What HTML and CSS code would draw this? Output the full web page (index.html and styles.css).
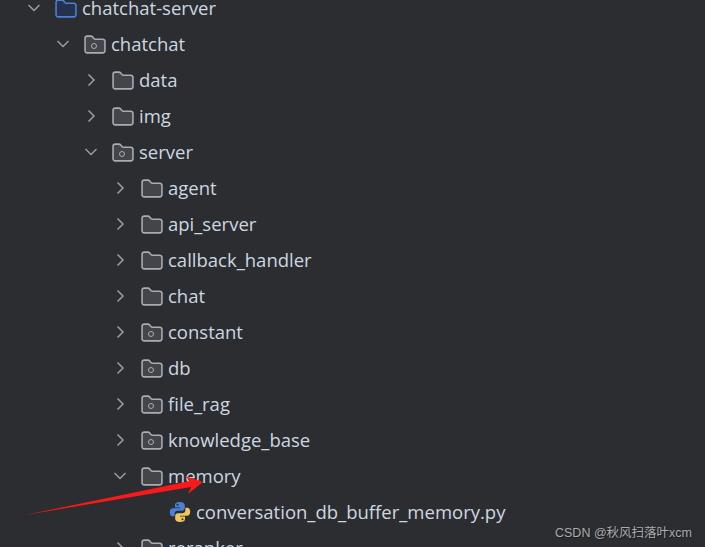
FILE: index.html
```html
<!DOCTYPE html>
<html lang="zh-CN">
<head>
  <meta charset="UTF-8" />
  <title>chatchat-server</title>
  <link rel="stylesheet" href="styles.css">
</head>
<body>

  <svg class="defs" width="0" height="0">
    <symbol id="folder" viewBox="0 0 21 18">
      <path d="M1 3.2C1 1.9 1.9 1 3.2 1H6.6C7.3 1 7.9 1.3 8.3 1.8L9.6 3.4C9.9 3.8 10.4 4 10.9 4H17.8C19.1 4 20 4.9 20 6.2V14.8C20 16.1 19.1 17 17.8 17H3.2C1.9 17 1 16.1 1 14.8Z" />
    </symbol>
    <symbol id="chev-open" viewBox="0 0 14 14">
      <path d="M1.5 4L7 9.5L12.5 4" />
    </symbol>
    <symbol id="chev-closed" viewBox="0 0 14 14">
      <path d="M4.5 1.5L10 7L4.5 12.5" />
    </symbol>
  </svg>

  <div class="arbol">
    <div class="fila nivel-0">
      <svg class="chev"><use href="#chev-open" /></svg>
      <svg class="pasta azul"><use href="#folder" /></svg>
      <span class="nome">chatchat-server</span>
    </div>
    <div class="fila nivel-1">
      <svg class="chev"><use href="#chev-open" /></svg>
      <span class="pasta-pkg"><svg class="pasta"><use href="#folder" /></svg><i class="anel"></i></span>
      <span class="nome">chatchat</span>
    </div>
    <div class="fila nivel-2">
      <svg class="chev"><use href="#chev-closed" /></svg>
      <svg class="pasta"><use href="#folder" /></svg>
      <span class="nome">data</span>
    </div>
    <div class="fila nivel-2">
      <svg class="chev"><use href="#chev-closed" /></svg>
      <svg class="pasta"><use href="#folder" /></svg>
      <span class="nome">img</span>
    </div>
    <div class="fila nivel-2">
      <svg class="chev"><use href="#chev-open" /></svg>
      <span class="pasta-pkg"><svg class="pasta"><use href="#folder" /></svg><i class="anel"></i></span>
      <span class="nome">server</span>
    </div>
    <div class="fila nivel-3">
      <svg class="chev"><use href="#chev-closed" /></svg>
      <svg class="pasta"><use href="#folder" /></svg>
      <span class="nome">agent</span>
    </div>
    <div class="fila nivel-3">
      <svg class="chev"><use href="#chev-closed" /></svg>
      <svg class="pasta"><use href="#folder" /></svg>
      <span class="nome">api_server</span>
    </div>
    <div class="fila nivel-3">
      <svg class="chev"><use href="#chev-closed" /></svg>
      <svg class="pasta"><use href="#folder" /></svg>
      <span class="nome">callback_handler</span>
    </div>
    <div class="fila nivel-3">
      <svg class="chev"><use href="#chev-closed" /></svg>
      <svg class="pasta"><use href="#folder" /></svg>
      <span class="nome">chat</span>
    </div>
    <div class="fila nivel-3">
      <svg class="chev"><use href="#chev-closed" /></svg>
      <span class="pasta-pkg"><svg class="pasta"><use href="#folder" /></svg><i class="anel"></i></span>
      <span class="nome">constant</span>
    </div>
    <div class="fila nivel-3">
      <svg class="chev"><use href="#chev-closed" /></svg>
      <span class="pasta-pkg"><svg class="pasta"><use href="#folder" /></svg><i class="anel"></i></span>
      <span class="nome">db</span>
    </div>
    <div class="fila nivel-3">
      <svg class="chev"><use href="#chev-closed" /></svg>
      <span class="pasta-pkg"><svg class="pasta"><use href="#folder" /></svg><i class="anel"></i></span>
      <span class="nome">file_rag</span>
    </div>
    <div class="fila nivel-3">
      <svg class="chev"><use href="#chev-closed" /></svg>
      <span class="pasta-pkg"><svg class="pasta"><use href="#folder" /></svg><i class="anel"></i></span>
      <span class="nome">knowledge_base</span>
    </div>
    <div class="fila nivel-3">
      <svg class="chev"><use href="#chev-open" /></svg>
      <svg class="pasta"><use href="#folder" /></svg>
      <span class="nome">memory</span>
    </div>
    <div class="fila nivel-4">
      <svg class="py" viewBox="0 0 22 22">
        <path class="py-azul" d="M10.8 1C6.5 1 6 2.8 6 4.2V6.5H11V7.3H3.8C2 7.3 .8 8.8 .8 11.2C.8 13.6 2 15.2 3.8 15.2H5.6V12.7C5.6 11 7 9.7 8.7 9.7H13.2C14.6 9.7 15.8 8.5 15.8 7.1V4.2C15.8 2.5 14.3 1 10.8 1Z" />
        <path class="py-amarelo" d="M11.2 21C15.5 21 16 19.2 16 17.8V15.5H11V14.7H18.2C20 14.7 21.2 13.2 21.2 10.8C21.2 8.4 20 6.8 18.2 6.8H16.4V9.3C16.4 11 15 12.3 13.3 12.3H8.8C7.4 12.3 6.2 13.5 6.2 14.9V17.8C6.2 19.5 7.7 21 11.2 21Z" />
        <circle class="py-olho" cx="8.5" cy="3.8" r="1" />
        <circle class="py-olho" cx="13.5" cy="18.2" r="1" />
      </svg>
      <span class="nome">conversation_db_buffer_memory.py</span>
    </div>
    <div class="fila nivel-3">
      <svg class="chev"><use href="#chev-closed" /></svg>
      <svg class="pasta"><use href="#folder" /></svg>
      <span class="nome">reranker</span>
    </div>
  </div>

  <svg class="seta" viewBox="0 0 705 547">
    <path d="M25 515L190 481L185 476L203 482L188 494L191 487Z" />
  </svg>

  <div class="marca">CSDN @秋风扫落叶xcm</div>

</body>
</html>
```

FILE: styles.css
```css
html, body {
  height: 100%;
}

body {
  margin: 0;
  background-color: #2b2d30;
  overflow: hidden;
  position: relative;
  font-family: "Open Sans", "Noto Sans", sans-serif;
}

.defs {
  display: block;
  height: 0;
}

.arbol {
  margin-top: -10px;
  display: flex;
  flex-direction: column;
}

.fila {
  height: 36px;
  flex: none;
  display: flex;
  align-items: center;
  font-size: 18.5px;
  color: #cdd7e2;
  white-space: nowrap;
}

.nome {
  margin-bottom: 2px;
}

.nivel-0 { padding-left: 27px; }
.nivel-1 { padding-left: 56px; }
.nivel-2 { padding-left: 84px; }
.nivel-3 { padding-left: 113px; }
.nivel-4 { padding-left: 169px; }

.chev {
  width: 14px;
  height: 14px;
  flex: none;
  margin-right: 14px;
  fill: none;
  stroke: #9a9da3;
  stroke-width: 1.5;
}

.pasta {
  width: 22px;
  height: 19px;
  flex: none;
  display: block;
  fill: #43454a;
  stroke: #a9acb1;
  stroke-width: 1.5;
}

.pasta.azul {
  fill: #25324d;
  stroke: #4c7fd6;
}

.fila > .pasta,
.pasta-pkg {
  margin-right: 5px;
}

.pasta-pkg {
  position: relative;
  flex: none;
}

.anel {
  position: absolute;
  left: 7px;
  top: 8px;
  width: 4px;
  height: 4px;
  border: 1.5px solid #a9acb1;
  border-radius: 50%;
}

.py {
  width: 22px;
  height: 22px;
  flex: none;
  margin-right: 5px;
}

.py-azul { fill: #4a80d8; }
.py-amarelo { fill: #f2c55c; }
.py-olho { fill: #2b2d30; }

.seta {
  position: absolute;
  left: 0;
  top: 0;
  width: 705px;
  height: 547px;
  fill: #f9191a;
}

.marca {
  position: absolute;
  left: 555px;
  top: 525px;
  font-family: "Liberation Sans", "Noto Sans CJK SC", sans-serif;
  font-size: 12.5px;
  line-height: 16px;
  color: #a9abae;
  text-shadow: 1px 1px 1px #1c1d1f;
  white-space: nowrap;
}
```
